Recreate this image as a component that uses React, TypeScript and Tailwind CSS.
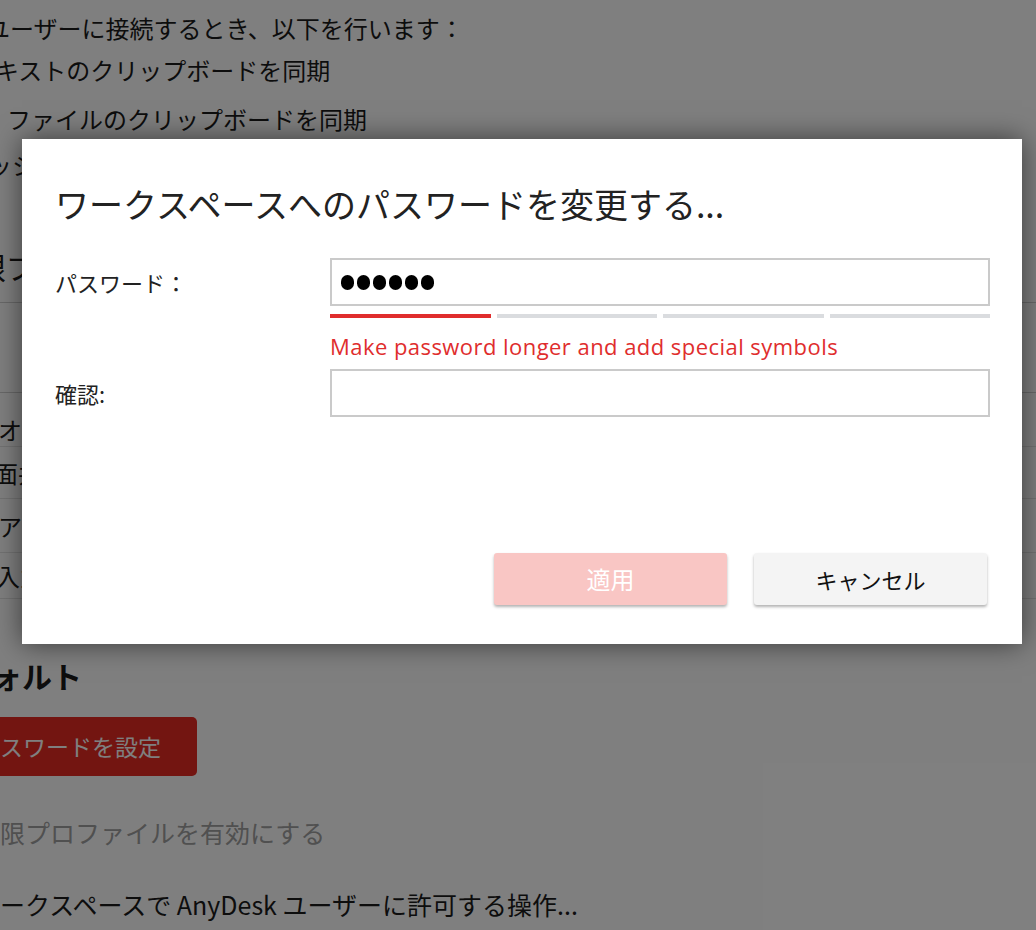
import React from 'react';

const jp = "font-['Noto_Sans_CJK_JP','Noto_Sans',sans-serif]";

function PasswordDots({ count }: { count: number }) {
  return (
    <div className="flex items-center gap-[3px]">
      {Array.from({ length: count }).map((_, i) => (
        <span key={i} className="block w-[13px] h-[15px] rounded-full bg-black" />
      ))}
    </div>
  );
}

function StrengthBar({ level }: { level: number }) {
  return (
    <div className="mt-[8px] flex gap-[6px]">
      {[0, 1, 2, 3].map(i => (
        <div key={i} className={`h-[4px] flex-1 ${i < level ? 'bg-[#e02d2d]' : 'bg-[#dadcdf]'}`} />
      ))}
    </div>
  );
}

function Background() {
  return (
    <div className={`${jp} text-[#1a1a1a] flex flex-col pt-[11px]`}>
      <div className="h-[34px] leading-[34px] text-[24px] -ml-[14px] whitespace-nowrap">ユーザーに接続するとき、以下を行います：</div>
      <div className="mt-[8px] h-[34px] leading-[34px] text-[24px] -ml-[29px] whitespace-nowrap">テキストのクリップボードを同期</div>
      <div className="mt-[15px] h-[34px] leading-[34px] text-[24px] ml-[7px] whitespace-nowrap">ファイルのクリップボードを同期</div>
      <div className="mt-[12px] h-[34px] leading-[34px] text-[24px] -ml-[36px] whitespace-nowrap">セッションを録画</div>
      <div className="mt-[64px] h-[40px] leading-[40px] text-[30px] -ml-[24px] whitespace-nowrap">限プロファイル</div>
      <div className="mt-[16px] border-t border-[#d0d0d0] h-[90px]" />
      <div className="border-t border-[#d0d0d0] h-[54px] pt-[20px] text-[24px] leading-[34px] -ml-[2px] whitespace-nowrap">オーディオ</div>
      <div className="border-t border-[#e4e4e4] h-[52px] flex items-center text-[24px] -ml-[6px] whitespace-nowrap">面共有</div>
      <div className="border-t border-[#e4e4e4] h-[54px] flex items-center text-[24px] -ml-[2px] whitespace-nowrap">アクセス</div>
      <div className="border-t border-[#e4e4e4] border-b h-[47px] flex items-center text-[24px] -ml-[4px] whitespace-nowrap">入力</div>
      <div className="mt-[56px] h-[40px] leading-[40px] text-[30px] font-bold -ml-[68px] whitespace-nowrap">デフォルト</div>
      <div className="mt-[22px] -ml-[60px] w-[257px] h-[59px] rounded-[5px] bg-[#e62a22] text-white text-[23px] flex items-center pl-[37px] whitespace-nowrap">
        パスワードを設定
      </div>
      <div className="mt-[38px] h-[36px] leading-[36px] text-[25px] text-[#a0a0a0] -ml-[25px] whitespace-nowrap">権限プロファイルを有効にする</div>
      <div className="mt-[36px] h-[36px] leading-[36px] text-[25px] -ml-[25px] whitespace-nowrap">ワークスペースで AnyDesk ユーザーに許可する操作...</div>
    </div>
  );
}

export default function App() {
  return (
    <div className="relative w-full h-[930px] overflow-hidden bg-white">
      <Background />
      <div className="absolute inset-0 bg-black/50" />

      <div className={`${jp} absolute left-[22px] top-[139px] w-[1000px] h-[505px] bg-white shadow-[0_0_26px_rgba(0,0,0,0.55)] pl-[33px] pr-[32px] pt-[44px] flex flex-col`}>
        <h1 className="text-[34px] leading-[42px] text-[#222] font-normal whitespace-nowrap">ワークスペースへのパスワードを変更する...</h1>

        <div className="mt-[33px] flex">
          <div className="w-[275px] h-[48px] flex items-center text-[22px] text-[#222]">パスワード：</div>
          <div className="flex-1">
            <div className="h-[48px] border-2 border-[#cacaca] flex items-center pl-[9px]">
              <PasswordDots count={6} />
            </div>
            <StrengthBar level={1} />
            <div className="mt-[13px] h-[30px] leading-[30px] text-[22px] tracking-[0.45px] text-[#e02d2d] font-['Open_Sans','Noto_Sans',sans-serif] whitespace-nowrap">
              Make password longer and add special symbols
            </div>
          </div>
        </div>

        <div className="mt-[8px] flex">
          <div className="w-[275px] h-[48px] flex items-center text-[22px] text-[#222]">確認:</div>
          <div className="flex-1 h-[48px] border-2 border-[#cacaca]" />
        </div>

        <div className="mt-auto mb-[39px] flex justify-end gap-[27px] pr-[3px]">
          <button className="w-[233px] h-[52px] rounded-[3px] bg-[#f9c6c4] text-white text-[24px] shadow-[0_2px_3px_rgba(0,0,0,0.3)]">
            適用
          </button>
          <button className="w-[233px] h-[52px] rounded-[3px] bg-[#f4f4f4] text-[#111] text-[22px] shadow-[0_2px_3px_rgba(0,0,0,0.3)]">
            キャンセル
          </button>
        </div>
      </div>
    </div>
  );
}
